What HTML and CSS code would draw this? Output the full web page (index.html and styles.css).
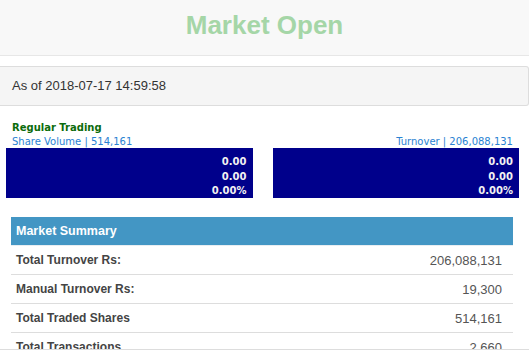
FILE: index.html
```html
<!DOCTYPE html>
<html>
<head>
<meta charset="utf-8">
<link rel="stylesheet" href="styles.css">
</head>
<body>
<header class="status-bar">
  <h1 class="status-title">Market Open</h1>
</header>
<div class="asof">As of 2018-07-17 14:59:58</div>
<section class="trading">
  <div class="trading-col">
    <div class="trading-label">Regular Trading</div>
    <div class="trading-sub">Share Volume | 514,161</div>
    <div class="trading-box">
      <div>0.00</div>
      <div>0.00</div>
      <div>0.00%</div>
    </div>
  </div>
  <div class="trading-col">
    <div class="trading-label">&nbsp;</div>
    <div class="trading-sub right">Turnover | 206,088,131</div>
    <div class="trading-box">
      <div>0.00</div>
      <div>0.00</div>
      <div>0.00%</div>
    </div>
  </div>
</section>
<section class="summary">
  <div class="summary-head">Market Summary</div>
  <div class="summary-row"><span class="lbl">Total Turnover Rs:</span><span class="val">206,088,131</span></div>
  <div class="summary-row"><span class="lbl">Manual Turnover Rs:</span><span class="val">19,300</span></div>
  <div class="summary-row"><span class="lbl">Total Traded Shares</span><span class="val">514,161</span></div>
  <div class="summary-row"><span class="lbl">Total Transactions</span><span class="val">2,660</span></div>
</section>
<div class="bottom-edge"></div>
</body>
</html>
```
FILE: styles.css
```css
html, body {
  margin: 0;
  padding: 0;
  background: #ffffff;
  overflow: hidden;
}
body {
  font-family: "Liberation Sans", Arial, sans-serif;
  color: #333;
}
.status-bar {
  background: #f8f8f8;
  border-bottom: 1px solid #e7e7e7;
  height: 55px;
  box-sizing: border-box;
  height: 56px;
  padding-bottom: 5px;
  display: flex;
  align-items: center;
  justify-content: center;
}
.status-title {
  margin: 0;
  font-size: 26px;
  font-weight: bold;
  color: #a5d6a7;
  line-height: 30px;
}
.asof {
  margin-top: 10px;
  background: #f5f5f5;
  border-top: 1px solid #dddddd;
  border-bottom: 1px solid #dddddd;
  border-right: 1px solid #dddddd;
  border-radius: 0 3px 3px 0;
  height: 38px;
  box-sizing: content-box;
  padding-left: 12px;
  font-size: 13px;
  line-height: 38px;
  color: #333;
}
.trading {
  display: flex;
  gap: 20px;
  padding: 15px 10px 0 6px;
  font-family: "DejaVu Sans", Verdana, sans-serif;
  font-size: 10px;
}
.trading-col {
  flex: 1;
  display: flex;
  flex-direction: column;
}
.trading-label {
  font-weight: bold;
  color: #0b6b0b;
  line-height: 14px;
  padding: 0 6px;
}
.trading-sub {
  color: #2a82d2;
  line-height: 13px;
  padding: 0 6px;
}
.trading-sub.right {
  text-align: right;
}
.trading-box {
  background: #00008b;
  color: #f2f2f2;
  font-weight: bold;
  text-align: right;
  line-height: 14.5px;
  padding: 7px 6px 0 6px;
  height: 50px;
  box-sizing: border-box;
}
.summary {
  margin: 19px 16px 0 11px;
}
.summary-head {
  background: #4396c4;
  color: #ffffff;
  font-size: 12.5px;
  font-weight: bold;
  height: 28px;
  line-height: 28px;
  padding-left: 5px;
  border-bottom: 1px solid #e8eef2;
}
.summary-row {
  display: flex;
  justify-content: space-between;
  border-bottom: 1px solid #dddddd;
  height: 28px;
  line-height: 29px;
  padding: 0 11px 0 5px;
  font-size: 13px;
}
.lbl {
  color: #444;
  font-weight: bold;
  font-size: 12px;
}
.val {
  color: #555;
}
.bottom-edge {
  position: fixed;
  left: 0;
  right: 0;
  bottom: 0;
  height: 1px;
  border-top: 1px solid #dddddd;
  background: #ffffff;
}
```
